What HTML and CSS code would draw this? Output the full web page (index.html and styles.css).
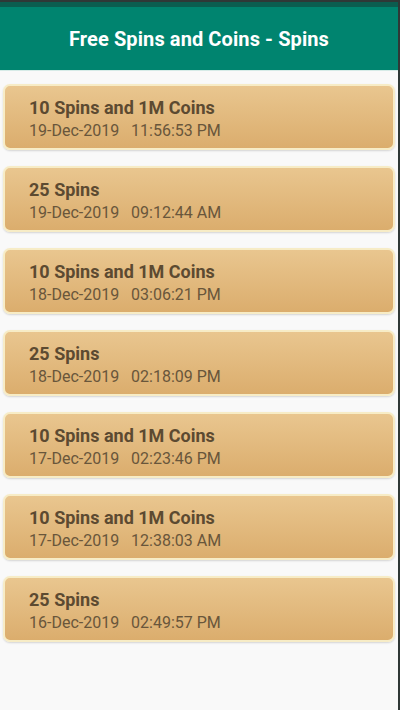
FILE: index.html
```html
<!DOCTYPE html>
<html lang="en">
<head>
    <meta charset="UTF-8">
    <meta name="viewport" content="width=device-width, initial-scale=1.0">
    <title>Free Spins and Coins - Spins</title>
    <link rel="stylesheet" href="styles.css">
</head>
<body>

    <div class="screen">
        <div class="status-bar"></div>

        <div class="toolbar">
            <h1>Free Spins and Coins - Spins</h1>
        </div>

        <!-- Список наград -->
        <div class="list">
            <div class="card">
                <div class="card-title">10 Spins and 1M Coins</div>
                <div class="card-date">19-Dec-2019&nbsp;&nbsp;&nbsp;11:56:53 PM</div>
            </div>
            <div class="card">
                <div class="card-title">25 Spins</div>
                <div class="card-date">19-Dec-2019&nbsp;&nbsp;&nbsp;09:12:44 AM</div>
            </div>
            <div class="card">
                <div class="card-title">10 Spins and 1M Coins</div>
                <div class="card-date">18-Dec-2019&nbsp;&nbsp;&nbsp;03:06:21 PM</div>
            </div>
            <div class="card">
                <div class="card-title">25 Spins</div>
                <div class="card-date">18-Dec-2019&nbsp;&nbsp;&nbsp;02:18:09 PM</div>
            </div>
            <div class="card">
                <div class="card-title">10 Spins and 1M Coins</div>
                <div class="card-date">17-Dec-2019&nbsp;&nbsp;&nbsp;02:23:46 PM</div>
            </div>
            <div class="card">
                <div class="card-title">10 Spins and 1M Coins</div>
                <div class="card-date">17-Dec-2019&nbsp;&nbsp;&nbsp;12:38:03 AM</div>
            </div>
            <div class="card">
                <div class="card-title">25 Spins</div>
                <div class="card-date">16-Dec-2019&nbsp;&nbsp;&nbsp;02:49:57 PM</div>
            </div>
        </div>
    </div>

</body>
</html>
```

FILE: styles.css
```css
body {
    margin: 0;
    padding: 0;
    font-family: Roboto, "Liberation Sans", sans-serif;
    background-color: #2f3836;
    overflow: hidden;
}

.screen {
    width: 398px;
    height: 708px;
    background-color: #f9f9f9;
    border-top: 2px solid #2f3836;
    display: flex;
    flex-direction: column;
}

.status-bar {
    height: 5px;
    background-color: #0b5d4f;
}

.toolbar {
    height: 63px;
    background-color: #00846f;
    border-bottom: 1px solid #d6ebe7;
    display: flex;
    align-items: center;
    justify-content: center;
}

.toolbar h1 {
    margin: 0;
    font-size: 20px;
    font-weight: bold;
    color: #fff;
    letter-spacing: 0.1px;
}

.list {
    display: flex;
    flex-direction: column;
    gap: 16px;
    padding: 13px 3px 0 3px;
}

/* Карточка награды */
.card {
    height: 66px;
    box-sizing: border-box;
    border: 2px solid #f7ecc6;
    border-radius: 7px;
    background: linear-gradient(to bottom, #e9c68f, #dbad6d);
    box-shadow: 0 1px 2px rgba(0, 0, 0, 0.15);
    padding: 11px 0 0 24px;
}

.card-title {
    font-size: 18px;
    font-weight: bold;
    color: #5c4a31;
    line-height: 22px;
}

.card-date {
    font-size: 16px;
    color: #69563b;
    line-height: 24px;
}
```
